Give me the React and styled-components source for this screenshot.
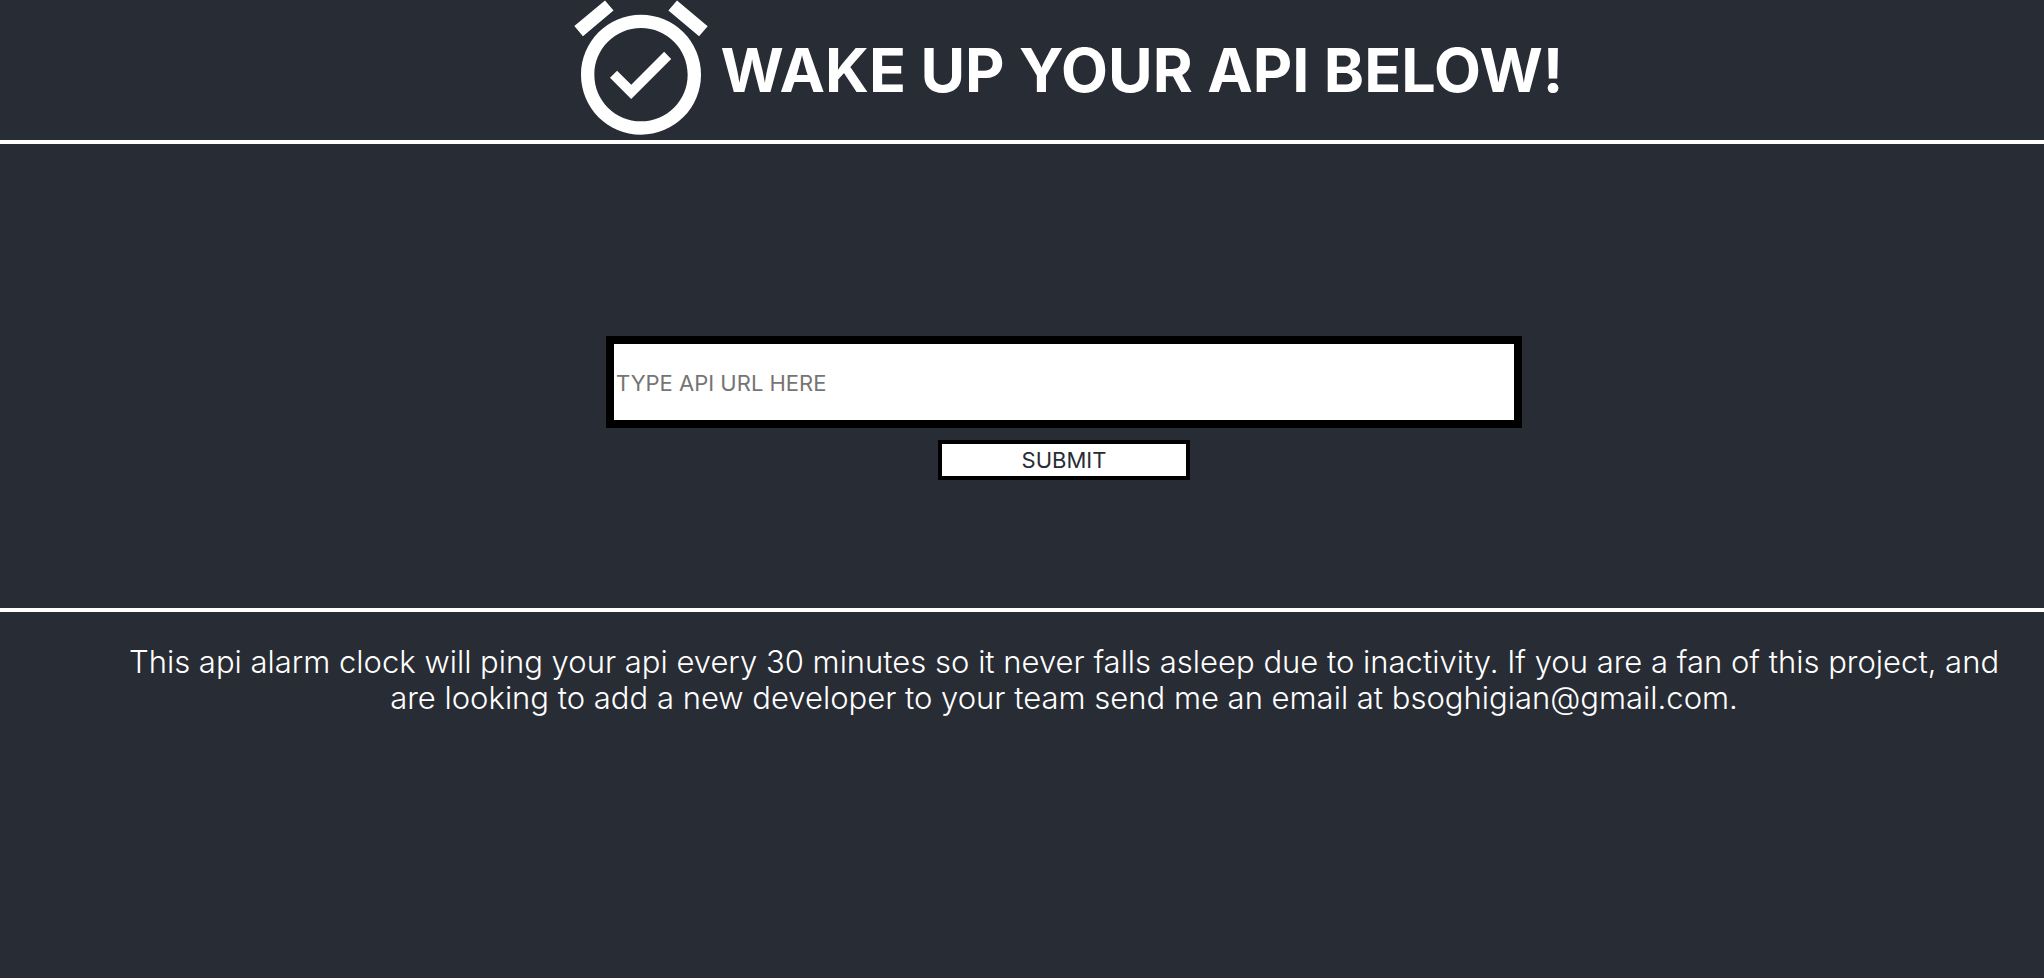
import React from "react";
import styled, { createGlobalStyle } from "styled-components";
import { MdAlarmOn } from "react-icons/md";

const GlobalStyle = createGlobalStyle`
  *, *::before, *::after { box-sizing: border-box; }
  body {
    margin: 0;
    background: #282c34;
    color: #ffffff;
    font-family: Inter, "Liberation Sans", sans-serif;
  }
`;

const Page = styled.div`
  min-height: 100vh;
`;

const Header = styled.header`
  display: flex;
  align-items: center;
  justify-content: center;
  height: 144px;
  padding-left: 80px;
  border-bottom: 4px solid #ffffff;
  overflow: hidden;
`;

const AlarmIcon = styled(MdAlarmOn)`
  flex: none;
  width: 160px;
  height: 160px;
  margin-bottom: 4px;
`;

const Title = styled.h1`
  margin: 0;
  font-size: 61px;
  line-height: 72px;
  font-weight: 700;
  white-space: nowrap;
`;

const Form = styled.form`
  display: flex;
  flex-direction: column;
  align-items: center;
  gap: 12px;
  padding: 192px 0 128px 84px;
  border-bottom: 4px solid #ffffff;
`;

const UrlInput = styled.input`
  width: 100%;
  max-width: 916px;
  height: 92px;
  padding: 4px 2px 2px;
  border: 8px solid #000000;
  border-radius: 0;
  background: #ffffff;
  color: #282c34;
  font-family: inherit;
  font-size: 22px;

  &::placeholder { color: #757575; }
`;

const SubmitButton = styled.button`
  width: 252px;
  height: 40px;
  padding: 0;
  border: 4px solid #000000;
  background: #ffffff;
  color: #282c34;
  font-family: inherit;
  font-size: 22px;
  line-height: 32px;
`;

const About = styled.p`
  margin: 0;
  padding: 32px 40px 32px 124px;
  font-size: 31px;
  font-weight: 300;
  line-height: 36px;
  text-align: center;
`;

export default function App() {
  return (
    <Page>
      <GlobalStyle />
      <Header>
        <AlarmIcon aria-hidden="true" />
        <Title>WAKE UP YOUR API BELOW!</Title>
      </Header>
      <main>
        <Form onSubmit={(event) => event.preventDefault()}>
          <UrlInput type="text" aria-label="API URL" placeholder="TYPE API URL HERE" />
          <SubmitButton type="submit">SUBMIT</SubmitButton>
        </Form>
        <About>
          This api alarm clock will ping your api every 30 minutes so it never falls asleep due to
          inactivity. If you are a fan of this project, and are looking to add a new developer to
          your team send me an email at bsoghigian@gmail.com.
        </About>
      </main>
    </Page>
  );
}
